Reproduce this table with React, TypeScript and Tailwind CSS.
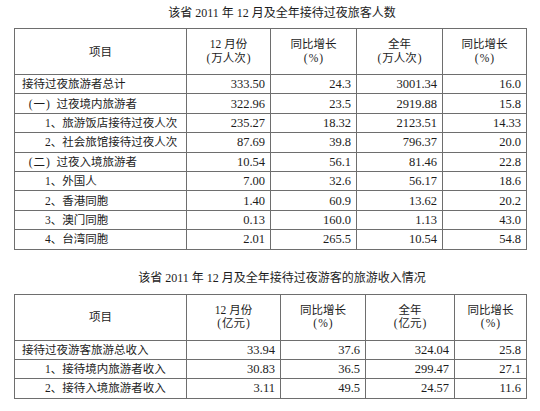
import React from "react";

type Row = [string, number, string, string, string, string];

const t1: Row[] = [
  ["接待过夜旅游者总计", 0, "333.50", "24.3", "3001.34", "16.0"],
  ["（一）过夜境内旅游者", 0, "322.96", "23.5", "2919.88", "15.8"],
  ["1、旅游饭店接待过夜人次", 1, "235.27", "18.32", "2123.51", "14.33"],
  ["2、社会旅馆接待过夜人次", 1, "87.69", "39.8", "796.37", "20.0"],
  ["（二）过夜入境旅游者", 0, "10.54", "56.1", "81.46", "22.8"],
  ["1、外国人", 1, "7.00", "32.6", "56.17", "18.6"],
  ["2、香港同胞", 1, "1.40", "60.9", "13.62", "20.2"],
  ["3、澳门同胞", 1, "0.13", "160.0", "1.13", "43.0"],
  ["4、台湾同胞", 1, "2.01", "265.5", "10.54", "54.8"],
];

const t2: Row[] = [
  ["接待过夜游客旅游总收入", 0, "33.94", "37.6", "324.04", "25.8"],
  ["1、接待境内旅游者收入", 1, "30.83", "36.5", "299.47", "27.1"],
  ["2、接待入境旅游者收入", 1, "3.11", "49.5", "24.57", "11.6"],
];

function Wide({ text }: { text: string }) {
  const parts = text.split(/([（）])/);
  return (
    <>
      {parts.map((p, i) =>
        p === "（" ? (
          <span key={i} className="inline-block w-[1em] pr-[1px] text-right">
            (
          </span>
        ) : p === "）" ? (
          <span key={i} className="inline-block w-[1em] pl-[1px] text-left">
            )
          </span>
        ) : (
          <React.Fragment key={i}>{p}</React.Fragment>
        )
      )}
    </>
  );
}

function DataTable({
  rows,
  widths,
  unit,
}: {
  rows: Row[];
  widths: number[];
  unit: string;
}) {
  const heads: [string, string][] = [
    ["12 月份", unit],
    ["同比增长", "（%）"],
    ["全年", unit],
    ["同比增长", "（%）"],
  ];
  return (
    <table className="ml-[14px] w-[512px] table-fixed border-collapse">
      <colgroup>
        {widths.map((w, i) => (
          <col key={i} style={{ width: w }} />
        ))}
      </colgroup>
      <thead>
        <tr className="h-[46px]">
          <th className="border border-[#6e6e6e] p-0 text-center align-middle text-[11.5px] font-normal leading-[14px]">
            项目
          </th>
          {heads.map(([a, b], i) => (
            <th
              key={i}
              className="border border-[#6e6e6e] p-0 text-center align-middle text-[11.5px] font-normal leading-[13.5px]"
            >
              <div>{a}</div>
              <div>
                <Wide text={b} />
              </div>
            </th>
          ))}
        </tr>
      </thead>
      <tbody>
        {rows.map((r, i) => (
          <tr key={i} className="h-[19.4px]">
            <td
              className={
                "border border-[#6e6e6e] py-0 pr-1 text-left align-middle text-[11.5px] leading-[18px] whitespace-nowrap " +
                (r[1] ? "pl-[30px]" : "pl-[7px]")
              }
            >
              <Wide text={r[0]} />
            </td>
            {r.slice(2).map((v, j) => (
              <td
                key={j}
                className="border border-[#6e6e6e] py-0 pl-1 pr-[5px] text-right align-middle text-[12.5px] leading-[18px]"
              >
                {v}
              </td>
            ))}
          </tr>
        ))}
      </tbody>
    </table>
  );
}

export default function App() {
  return (
    <div
      className="w-[540px] h-[411px] bg-white text-[#1c1c1c]"
      style={{
        fontFamily: '"Liberation Serif", "Noto Sans CJK SC", sans-serif',
      }}
    >
      <div className="h-[28px] pl-[24px] pt-[5px] text-center text-[12px] leading-[16px]">
        该省 2011 年 12 月及全年接待过夜旅客人数
      </div>
      <DataTable rows={t1} widths={[172, 84, 86, 86, 84]} unit="（万人次）" />
      <div className="h-[44px] pl-[24px] pt-[20px] text-center text-[12px] leading-[16px]">
        该省 2011 年 12 月及全年接待过夜游客的旅游收入情况
      </div>
      <DataTable rows={t2} widths={[172, 94, 85, 89, 72]} unit="（亿元）" />
    </div>
  );
}
